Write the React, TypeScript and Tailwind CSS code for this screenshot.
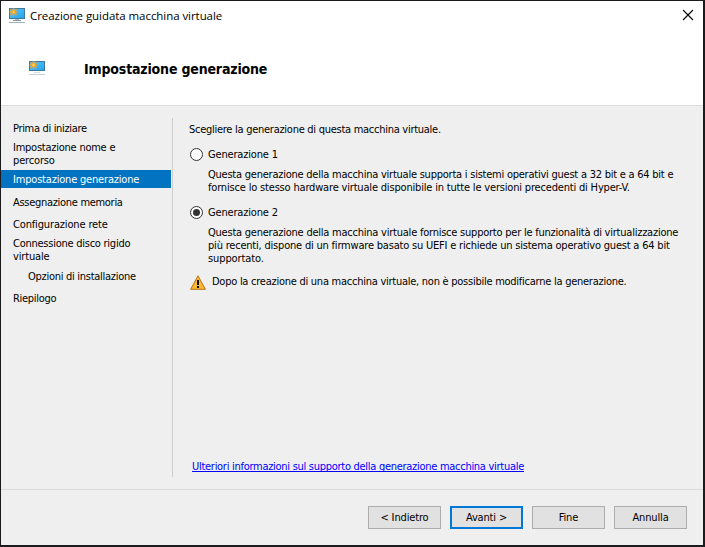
import type { ReactNode } from "react";

function Monitor({ small = false }: { small?: boolean }) {
  return (
    <svg width="17" height="16" viewBox="0 0 17 16" className="block shrink-0">
      <defs>
        <linearGradient id="screen" x1="0" y1="0" x2="1" y2="1">
          <stop offset="0" stopColor="#5cc4f8" />
          <stop offset="1" stopColor="#22a3f2" />
        </linearGradient>
      </defs>
      <rect x="0.5" y="0.5" width="15" height={small ? 9 : 10} fill="url(#screen)" stroke="#3f789b" />
      {!small && <path d="M6 11h4v1.500H6z" fill="#a9bcc9" />}
      {!small && <path d="M4 12h8v1H4z" fill="#7e99aa" />}
      {small && <path d="M5 11h6v1H5z" fill="#d5dfe6" />}
      <path d={small ? "M0 13h16v1H0z" : "M0 14h16v1H0z"} fill={small ? "#c3d0d9" : "#9db0bf"} />
      <path d="M4.500 0v8M0.500 4h8M1.500 1l6 6M7.500 1l-6 6" stroke="#f0a020" strokeWidth="1.500" />
      <circle cx="4.500" cy="4" r="2.200" fill="#f7ab2a" />
      <circle cx="4.500" cy="4" r="1.100" fill="#ffd873" />
    </svg>
  );
}

function Line({ children, className = "" }: { children: ReactNode; className?: string }) {
  return <div className={`h-[13px] whitespace-nowrap leading-[13px] ${className}`}>{children}</div>;
}

function Radio({ checked = false }: { checked?: boolean }) {
  return (
    <svg width="13" height="13" viewBox="0 0 13 13" className="block shrink-0">
      <circle cx="6.500" cy="6.500" r="6" fill="#fff" stroke="#333" />
      {checked && <circle cx="6.500" cy="6.500" r="3.500" fill="#333" />}
    </svg>
  );
}

function Button({ label, primary = false }: { label: string; primary?: boolean }) {
  return (
    <button
      className={`flex h-[23px] w-[73px] items-center justify-center whitespace-nowrap bg-[#e1e1e1] pt-[2px] tracking-[-0.15px] ${
        primary ? "border-2 border-[#0078d7]" : "border border-[#adadad]"
      }`}
    >
      {label}
    </button>
  );
}

export default function App() {
  return (
    <div className="h-[547px] w-[705px] overflow-hidden bg-[#1b1a1d] pl-px pt-px font-['DejaVu_Sans_Condensed','DejaVu_Sans',sans-serif] text-[11px] text-black">
      <div className="flex h-[544px] w-[702px] flex-col bg-[#efefef]">
        <header className="h-[105px] border-b border-[#dcdcdc] bg-white">
          <div className="flex h-[30px] items-start pl-2 pt-[7px]">
            <Monitor />
            <span className="ml-1 h-4 w-[200px] whitespace-nowrap font-['Open_Sans',sans-serif] text-[11.500px] leading-[16px] tracking-[-0.06px]">
              Creazione guidata macchina virtuale
            </span>
            <svg width="12" height="12" viewBox="0 0 12 12" className="ml-auto mr-[9px] mt-px">
              <path d="M1 1l10 10M11 1L1 11" stroke="#000" strokeWidth="1.100" />
            </svg>
          </div>
          <div className="flex items-start pl-7 pt-[30px]">
            <Monitor small />
            <h1 className="ml-[38px] whitespace-nowrap text-[14px] font-bold leading-[17px] tracking-[-0.17px]">
              Impostazione generazione
            </h1>
          </div>
        </header>
        <main className="flex h-[384px] border-b border-[#dcdcdc] pt-3">
          <nav className="h-[359px] w-[172px] border-r border-[#cdcdcd] pt-1">
            <Line className="pl-3 tracking-[-0.33px]">Prima di iniziare</Line>
            <Line className="mt-[6px] pl-3 tracking-[-0.24px]">Impostazione nome e</Line>
            <Line className="pl-3 tracking-[-0.15px]">percorso</Line>
            <div className="mt-[3px] flex h-[18px] w-[170px] items-center bg-[#0173c0] pt-px text-white">
              <Line className="pl-3 tracking-[-0.19px]">Impostazione generazione</Line>
            </div>
            <Line className="mt-2 pl-3 tracking-[-0.3px]">Assegnazione memoria</Line>
            <Line className="mt-[9px] pl-3 tracking-[-0.15px]">Configurazione rete</Line>
            <Line className="mt-[6px] pl-3 tracking-[-0.25px]">Connessione disco rigido</Line>
            <Line className="pl-3 tracking-[-0.15px]">virtuale</Line>
            <Line className="mt-[7px] pl-[27px] tracking-[-0.28px]">Opzioni di installazione</Line>
            <Line className="mt-[9px] pl-3 tracking-[-0.3px]">Riepilogo</Line>
          </nav>
          <section className="pl-[17px] pt-[5px]">
            <Line className="-ml-px tracking-[-0.27px]">Scegliere la generazione di questa macchina virtuale.</Line>
            <div className="mt-3 flex gap-[5px]">
              <Radio />
              <Line className="tracking-[-0.17px]">Generazione 1</Line>
            </div>
            <div className="mt-[7px] pl-[18px]">
              <Line className="tracking-[-0.235px]">
                Questa generazione della macchina virtuale supporta i sistemi operativi guest a 32 bit e a 64 bit e
              </Line>
              <Line className="tracking-[-0.18px]">
                fornisce lo stesso hardware virtuale disponibile in tutte le versioni precedenti di Hyper-V.
              </Line>
            </div>
            <div className="mt-3 flex gap-[5px]">
              <Radio checked />
              <Line className="tracking-[-0.17px]">Generazione 2</Line>
            </div>
            <div className="mt-[7px] pl-[18px]">
              <Line className="tracking-[-0.23px]">
                Questa generazione della macchina virtuale fornisce supporto per le funzionalità di virtualizzazione
              </Line>
              <Line className="tracking-[-0.2px]">
                più recenti, dispone di un firmware basato su UEFI e richiede un sistema operativo guest a 64 bit
              </Line>
              <Line className="tracking-[-0.1px]">supportato.</Line>
            </div>
            <div className="mt-[10px] flex">
              <svg width="16" height="15" viewBox="0 0 16 15" className="block shrink-0">
                <path d="M8 .8L15.400 14.300H.6z" fill="#fdb833" stroke="#b87514" strokeLinejoin="round" />
                <path d="M7 5h2v5H7zM7 11h2v2H7z" fill="#111" />
              </svg>
              <Line className="ml-[6px] tracking-[-0.255px]">
                Dopo la creazione di una macchina virtuale, non è possibile modificarne la generazione.
              </Line>
            </div>
            <a
              href="#"
              className="ml-[2px] mt-[170px] block w-fit whitespace-nowrap leading-[13px] tracking-[-0.28px] text-[#0000ff] underline [text-decoration-skip-ink:none]"
            >
              Ulteriori informazioni sul supporto della generazione macchina virtuale
            </a>
          </section>
        </main>
        <footer className="flex gap-[9px] pl-[367px] pt-4">
          <Button label="&lt; Indietro" />
          <Button label="Avanti &gt;" primary />
          <Button label="Fine" />
          <Button label="Annulla" />
        </footer>
      </div>
    </div>
  );
}
